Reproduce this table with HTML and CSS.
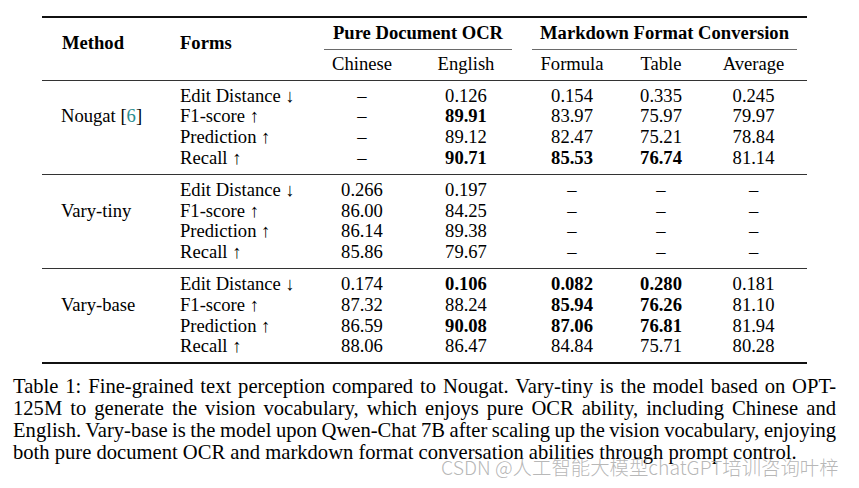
FILE: index.html
```html
<!DOCTYPE html>
<html lang="en">
<head>
<meta charset="utf-8">
<title>Table 1</title>
<link rel="stylesheet" href="styles.css">
</head>
<body>
<div class="page">
  <table class="results">
    <colgroup>
      <col class="c-method">
      <col class="c-forms">
      <col class="c-chinese">
      <col class="c-english">
      <col class="c-formula">
      <col class="c-table">
      <col class="c-average">
    </colgroup>
    <thead>
      <tr>
        <th class="side" rowspan="2">Method</th>
        <th class="side" rowspan="2">Forms</th>
        <th class="group" colspan="2"><div class="cmid">Pure Document OCR</div></th>
        <th class="group" colspan="3"><div class="cmid">Markdown Format Conversion</div></th>
      </tr>
      <tr class="sub">
        <th>Chinese</th>
        <th>English</th>
        <th>Formula</th>
        <th>Table</th>
        <th>Average</th>
      </tr>
    </thead>
    <tbody>
      <tr><td class="m"></td><td class="f">Edit Distance <span class="arr">↓</span></td><td>–</td><td>0.126</td><td>0.154</td><td>0.335</td><td>0.245</td></tr>
      <tr><td class="m">Nougat [<span class="cite">6</span>]</td><td class="f">F1-score <span class="arr">↑</span></td><td>–</td><td class="b">89.91</td><td>83.97</td><td>75.97</td><td>79.97</td></tr>
      <tr><td class="m"></td><td class="f">Prediction <span class="arr">↑</span></td><td>–</td><td>89.12</td><td>82.47</td><td>75.21</td><td>78.84</td></tr>
      <tr><td class="m"></td><td class="f">Recall <span class="arr">↑</span></td><td>–</td><td class="b">90.71</td><td class="b">85.53</td><td class="b">76.74</td><td>81.14</td></tr>
    </tbody>
    <tbody>
      <tr><td class="m"></td><td class="f">Edit Distance <span class="arr">↓</span></td><td>0.266</td><td>0.197</td><td>–</td><td>–</td><td>–</td></tr>
      <tr><td class="m">Vary-tiny</td><td class="f">F1-score <span class="arr">↑</span></td><td>86.00</td><td>84.25</td><td>–</td><td>–</td><td>–</td></tr>
      <tr><td class="m"></td><td class="f">Prediction <span class="arr">↑</span></td><td>86.14</td><td>89.38</td><td>–</td><td>–</td><td>–</td></tr>
      <tr><td class="m"></td><td class="f">Recall <span class="arr">↑</span></td><td>85.86</td><td>79.67</td><td>–</td><td>–</td><td>–</td></tr>
    </tbody>
    <tbody>
      <tr><td class="m"></td><td class="f">Edit Distance <span class="arr">↓</span></td><td>0.174</td><td class="b">0.106</td><td class="b">0.082</td><td class="b">0.280</td><td>0.181</td></tr>
      <tr><td class="m">Vary-base</td><td class="f">F1-score <span class="arr">↑</span></td><td>87.32</td><td>88.24</td><td class="b">85.94</td><td class="b">76.26</td><td>81.10</td></tr>
      <tr><td class="m"></td><td class="f">Prediction <span class="arr">↑</span></td><td>86.59</td><td class="b">90.08</td><td class="b">87.06</td><td class="b">76.81</td><td>81.94</td></tr>
      <tr><td class="m"></td><td class="f">Recall <span class="arr">↑</span></td><td>88.06</td><td>86.47</td><td>84.84</td><td>75.71</td><td>80.28</td></tr>
    </tbody>
  </table>
  <p class="caption">
    <span class="line">Table 1: Fine-grained text perception compared to Nougat. Vary-tiny is the model based on OPT-</span>
    <span class="line">125M to generate the vision vocabulary, which enjoys pure OCR ability, including Chinese and</span>
    <span class="line">English. Vary-base is the model upon Qwen-Chat 7B after scaling up the vision vocabulary, enjoying</span>
    <span class="line end">both pure document OCR and markdown format conversation abilities through prompt control.</span>
  </p>
  <div class="watermark">CSDN @人工智能大模型chatGPT培训咨询叶梓</div>
</div>
</body>
</html>
```

FILE: styles.css
```css
html, body {
  margin: 0;
  padding: 0;
  background: #ffffff;
}

.page {
  position: relative;
  width: 859px;
  height: 488px;
  overflow: hidden;
  padding-top: 16px;
  box-sizing: border-box;
  font-family: "Liberation Serif", "Times New Roman", serif;
  color: #000000;
}

.results {
  margin-left: 42px;
  width: 765px;
  table-layout: fixed;
  border-collapse: collapse;
  border-top: 2px solid #111111;
  border-bottom: 2px solid #111111;
  font-size: 18.6px;
  line-height: 20.8px;
}

.c-method { width: 118px; }
.c-forms { width: 154px; }
.c-chinese { width: 96px; }
.c-english { width: 112px; }
.c-formula { width: 100px; }
.c-table { width: 78px; }
.c-average { width: 107px; }

.results th,
.results td {
  padding: 0;
  text-align: center;
  white-space: nowrap;
}

.results th {
  font-weight: normal;
}

.results th.side {
  text-align: left;
  vertical-align: top;
  font-weight: bold;
  padding-top: 14.5px;
  padding-left: 20px;
}

.results th.group {
  font-weight: bold;
  padding-top: 5px;
}

.cmid {
  margin: 0 10px;
  padding-bottom: 5px;
  border-bottom: 1px solid #6a6a6a;
}

.results tr.sub th {
  padding-top: 4px;
  padding-bottom: 5px;
}

.results tbody {
  border-top: 1px solid #333333;
}

.results tbody tr:first-child td {
  padding-top: 5px;
}

.results tbody tr:last-child td {
  padding-bottom: 5px;
}

.results td.m,
.results td.f {
  text-align: left;
  padding-left: 20px;
}

.results td.m {
  padding-left: 19px;
}

.results td.b {
  font-weight: bold;
}

.arr {
  color: #000000;
}

.cite {
  color: #2a8d8f;
}

.caption {
  margin: 12px 0 0 13px;
  width: 823px;
  font-size: 20.6px;
  line-height: 21.8px;
}

.caption .line {
  display: block;
  text-align: justify;
  text-align-last: justify;
  word-spacing: -2px;
  white-space: nowrap;
}

.caption .line.end {
  text-align-last: left;
  word-spacing: 0;
}

.watermark {
  position: absolute;
  left: 441px;
  top: 455px;
  font-family: "Noto Sans CJK SC", "Noto Sans", sans-serif;
  font-weight: 300;
  font-size: 19.4px;
  line-height: 24px;
  color: rgba(165, 165, 165, 0.8);
  white-space: nowrap;
}
```
